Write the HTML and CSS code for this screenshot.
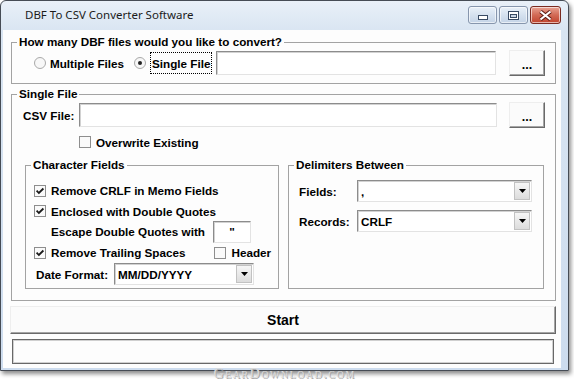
FILE: index.html
```html
<!DOCTYPE html>
<html lang="en">
  <head>
    <meta charset="UTF-8" />
    <title>DBF To CSV Converter Software</title>
    <link rel="stylesheet" href="styles.css">
  </head>
  <body>
    <div class="window">
      <div class="titlebar">
        <span class="title">DBF To CSV Converter Software</span>
        <div class="caption">
          <span class="capbtn capmin">
            <svg width="10" height="5" viewBox="0 0 10 5"><rect x="0.5" y="0.5" width="9" height="4" fill="#fff" stroke="#384a63" /></svg>
          </span>
          <span class="capbtn capmax">
            <svg width="11" height="9" viewBox="0 0 11 9"><rect x="0.5" y="0.5" width="10" height="8" fill="#fff" stroke="#384a63" /><rect x="2.5" y="3.5" width="6" height="3" fill="#c9d5e4" stroke="#384a63" /></svg>
          </span>
          <span class="capbtn capclose">
            <svg width="13" height="11" viewBox="0 0 13 11"><path d="M1.5 1.5 L11.5 9.5 M11.5 1.5 L1.5 9.5" stroke="#5a1a12" stroke-width="4" /><path d="M1.5 1.5 L11.5 9.5 M11.5 1.5 L1.5 9.5" stroke="#fff" stroke-width="2.2" /></svg>
          </span>
        </div>
      </div>

      <div class="client">
        <!-- antal filer -->
        <fieldset class="gruppe gruppeAntal">
          <legend>How many DBF files would you like to convert?</legend>
          <div class="antalRaekke">
            <span class="radio">
              <svg width="12" height="12" viewBox="0 0 12 12"><circle cx="6" cy="6" r="5.5" fill="#f7f7f7" stroke="#a9a9a9" /></svg>
              <span>Multiple Files</span>
            </span>
            <span class="radio radioValgt">
              <svg width="12" height="12" viewBox="0 0 12 12"><circle cx="6" cy="6" r="5.5" fill="#f7f7f7" stroke="#a9a9a9" /><circle cx="6" cy="6" r="2" fill="#222" /></svg>
              <span class="fokus">Single File</span>
            </span>
            <div class="felt feltAntal"></div>
            <div class="knap knapSti">...</div>
          </div>
        </fieldset>

        <!-- enkelt fil -->
        <fieldset class="gruppe gruppeEnkelt">
          <legend>Single File</legend>
          <div class="csvRaekke">
            <span class="csvLabel">CSV File:</span>
            <div class="felt feltCsv"></div>
            <div class="knap knapSti">...</div>
          </div>
          <div class="overskrivRaekke">
            <span class="tjek">
              <svg width="12" height="12" viewBox="0 0 12 12"><rect x="0.5" y="0.5" width="11" height="11" fill="#fafafa" stroke="#8e8e8e" /></svg>
              <span>Overwrite Existing</span>
            </span>
          </div>

          <div class="undergrupper">
            <fieldset class="gruppe gruppeTegn">
              <legend>Character Fields</legend>
              <div class="tegnRaekke">
                <span class="tjek">
                  <svg width="12" height="12" viewBox="0 0 12 12"><rect x="0.5" y="0.5" width="11" height="11" fill="#fafafa" stroke="#8e8e8e" /><path d="M2.6 5.6 L4.9 8 L9.4 3.5" fill="none" stroke="#1a1a1a" stroke-width="1.8" /></svg>
                  <span>Remove CRLF in Memo Fields</span>
                </span>
              </div>
              <div class="tegnRaekke raekkeKort">
                <span class="tjek">
                  <svg width="12" height="12" viewBox="0 0 12 12"><rect x="0.5" y="0.5" width="11" height="11" fill="#fafafa" stroke="#8e8e8e" /><path d="M2.6 5.6 L4.9 8 L9.4 3.5" fill="none" stroke="#1a1a1a" stroke-width="1.8" /></svg>
                  <span>Enclosed with Double Quotes</span>
                </span>
              </div>
              <div class="tegnRaekke escapeRaekke">
                <span>Escape Double Quotes with</span>
                <div class="felt feltEscape">"</div>
              </div>
              <div class="tegnRaekke">
                <span class="tjek">
                  <svg width="12" height="12" viewBox="0 0 12 12"><rect x="0.5" y="0.5" width="11" height="11" fill="#fafafa" stroke="#8e8e8e" /><path d="M2.6 5.6 L4.9 8 L9.4 3.5" fill="none" stroke="#1a1a1a" stroke-width="1.8" /></svg>
                  <span>Remove Trailing Spaces</span>
                </span>
                <span class="tjek tjekHeader">
                  <svg width="12" height="12" viewBox="0 0 12 12"><rect x="0.5" y="0.5" width="11" height="11" fill="#fafafa" stroke="#8e8e8e" /></svg>
                  <span>Header</span>
                </span>
              </div>
              <div class="tegnRaekke datoRaekke">
                <span>Date Format:</span>
                <div class="combo comboDato">
                  <span>MM/DD/YYYY</span>
                  <span class="pil"><svg width="7" height="4" viewBox="0 0 7 4"><path d="M0 0 H7 L3.5 4 Z" fill="#000" /></svg></span>
                </div>
              </div>
            </fieldset>

            <fieldset class="gruppe gruppeSkille">
              <legend>Delimiters Between</legend>
              <div class="skilleRaekke">
                <span class="skilleLabel">Fields:</span>
                <div class="combo comboSkille">
                  <span>,</span>
                  <span class="pil"><svg width="7" height="4" viewBox="0 0 7 4"><path d="M0 0 H7 L3.5 4 Z" fill="#000" /></svg></span>
                </div>
              </div>
              <div class="skilleRaekke">
                <span class="skilleLabel">Records:</span>
                <div class="combo comboSkille">
                  <span>CRLF</span>
                  <span class="pil"><svg width="7" height="4" viewBox="0 0 7 4"><path d="M0 0 H7 L3.5 4 Z" fill="#000" /></svg></span>
                </div>
              </div>
            </fieldset>
          </div>
        </fieldset>

        <div class="knap knapStart">Start</div>
        <div class="status"></div>
      </div>
    </div>
    <div class="vandmaerke">GearDownload.com</div>
  </body>
</html>
```

FILE: styles.css
```css
/* ---------VINDUE------------*/
* {
  box-sizing: border-box;
}

body {
  margin: 0;
  background-color: #ffffff;
  font-family: "Liberation Sans", Arial, sans-serif;
  font-size: 11.7px;
  font-weight: 700;
  color: #000000;
}

.window {
  width: 569px;
  height: 371px;
  display: flex;
  flex-direction: column;
  border: 1px solid #464c55;
  border-radius: 6px 6px 0 0;
  padding: 0 7px 2px 2px;
  background: linear-gradient(#e9f0f8, #d9e5f2 30px, #cddcee);
  box-shadow: 2px 3px 4px rgba(0, 0, 0, 0.45);
}

.titlebar {
  height: 29px;
  display: flex;
  justify-content: space-between;
}

.title {
  margin-left: 22px;
  margin-top: 6px;
  font-family: "Noto Sans", sans-serif;
  font-size: 11.5px;
  font-weight: 400;
  color: #1b1b1b;
}

.caption {
  display: flex;
  gap: 2px;
  margin-top: 5px;
}

.capbtn {
  width: 29px;
  height: 18px;
  display: flex;
  align-items: center;
  justify-content: center;
  border: 1px solid #8796ad;
  border-radius: 3px;
  background: linear-gradient(#eaf1f9, #d5e1ef 50%, #c4d3e6);
  box-shadow: inset 0 0 0 1px rgba(255, 255, 255, 0.6);
}

.capmin svg {
  margin-top: 5px;
}

.capclose {
  width: 31px;
  border-color: #7a2a20;
  background: linear-gradient(#e8a393, #d26a55 50%, #c0432d);
}

.client {
  flex: 1;
  background-color: #fdfdfd;
  padding: 5px 5px 0 8px;
}

/* ---------GRUPPER------------*/

.gruppe {
  margin: 0;
  padding: 0;
  min-width: 0;
  border: 1px solid #a3a3a3;
}

.gruppe legend {
  margin-left: 5px;
  padding: 0 2px;
  height: 14px;
  line-height: 14px;
}

.gruppeAntal {
  padding: 1px 0 7px 0;
}

.antalRaekke {
  height: 26px;
  padding-left: 22px;
  display: flex;
  align-items: center;
}

.radio {
  display: flex;
  align-items: center;
  gap: 4px;
  margin-right: 10px;
}

.radioValgt {
  margin-right: 4px;
}

.fokus {
  padding: 4px 1px 3px;
  border: 1px dotted #000000;
}

.felt {
  height: 24px;
  border: 1px solid;
  border-color: #8c8c8c #e3e3e3 #e3e3e3 #8c8c8c;
  box-shadow: inset 1px 1px 0 #d2d2d2;
  background-color: #ffffff;
}

.feltAntal {
  flex: 1;
}

.knap {
  display: flex;
  align-items: center;
  justify-content: center;
  border: 1px solid;
  border-color: #eeeeee #6a6a6a #6a6a6a #eeeeee;
  box-shadow: inset -1px -1px 0 #a5a5a5;
  background-color: #fbfbfb;
}

.knapSti {
  width: 36px;
  height: 26px;
  margin-left: 13px;
  margin-right: 10px;
  padding-top: 3px;
  font-size: 12.5px;
}

.gruppeEnkelt {
  margin-top: 3px;
  padding: 1px 0 11px 0;
}

.csvRaekke {
  height: 26px;
  padding-left: 11px;
  display: flex;
  align-items: center;
}

.csvLabel {
  width: 56px;
}

.feltCsv {
  flex: 1;
}

.csvRaekke .knapSti {
  margin-left: 12px;
}

.overskrivRaekke {
  height: 28px;
  padding-left: 67px;
  display: flex;
  align-items: center;
}

.tjek {
  display: flex;
  align-items: center;
  gap: 5px;
}

.undergrupper {
  margin-top: 2px;
  margin-left: 13px;
  display: grid;
  grid-template-columns: 254px 256px;
  gap: 9px;
}

/* ---------TEGN FELTER------------*/

.gruppeTegn {
  padding: 8px 0 3px 0;
}

.tegnRaekke {
  height: 21px;
  padding-left: 8px;
  display: flex;
  align-items: center;
}

.raekkeKort {
  height: 20px;
}

.escapeRaekke {
  padding-left: 25px;
}

.feltEscape {
  width: 38px;
  height: 22px;
  margin-left: 8px;
  padding-top: 3px;
  text-align: center;
}

.tjekHeader {
  margin-left: 29px;
}

.datoRaekke {
  height: 22px;
  padding-left: 10px;
}

.combo {
  height: 22px;
  display: flex;
  align-items: center;
  justify-content: space-between;
  padding-left: 3px;
  border: 1px solid;
  border-color: #8c8c8c #e3e3e3 #e3e3e3 #8c8c8c;
  box-shadow: inset 1px 1px 0 #d2d2d2;
  background-color: #ffffff;
}

.comboDato {
  width: 140px;
  margin-left: 6px;
}

.pil {
  width: 16px;
  height: 18px;
  margin-right: 1px;
  display: flex;
  align-items: center;
  justify-content: center;
  border: 1px solid #c2c2c2;
  background: linear-gradient(#f6f6f6, #dcdcdc);
}

/* ---------SKILLETEGN------------*/

.gruppeSkille {
  padding: 8px 0 0 0;
}

.skilleRaekke {
  height: 22px;
  margin-bottom: 8px;
  padding-left: 10px;
  display: flex;
  align-items: center;
}

.skilleLabel {
  width: 58px;
}

.comboSkille {
  width: 175px;
}

/* ---------START OG STATUS------------*/

.knapStart {
  width: 546px;
  height: 28px;
  margin-top: 5px;
  margin-left: -1px;
  font-size: 14px;
}

.status {
  width: 542px;
  height: 25px;
  margin-top: 5px;
  margin-left: 1px;
  border: 1px solid #686868;
  box-shadow: inset 0 0 0 1px #d0d0d0;
}

.vandmaerke {
  width: 569px;
  margin-top: -3px;
  text-align: center;
  font-family: "Liberation Serif", serif;
  font-size: 14px;
  font-weight: 400;
  font-variant: small-caps;
  letter-spacing: 1.5px;
  line-height: 12px;
  color: #dadada;
  text-shadow: 1px 1px 0 #a8a8a8;
}
```
